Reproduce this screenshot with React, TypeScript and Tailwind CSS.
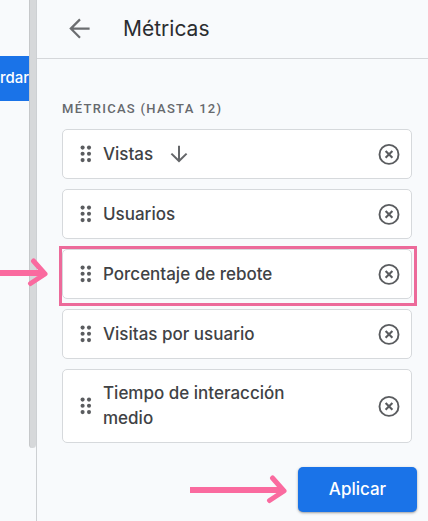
type Metric = {
  name: string;
  sorted?: boolean;
  highlighted?: boolean;
};

const metrics: Metric[] = [
  { name: "Vistas", sorted: true },
  { name: "Usuarios" },
  { name: "Porcentaje de rebote", highlighted: true },
  { name: "Visitas por usuario" },
  { name: "Tiempo de interacción medio" },
];

function BackIcon() {
  return (
    <svg viewBox="0 0 22 22" className="h-[22px] w-[22px]" fill="none" stroke="#6b6d70" strokeWidth="2.2">
      <path d="M20.6 10.6H2.6M11 1.4 1.8 10.6l9.2 9.2" />
    </svg>
  );
}

function SortIcon() {
  return (
    <svg viewBox="0 0 18 18" className="h-[18px] w-[18px] shrink-0" fill="none" stroke="#646669" strokeWidth="2">
      <path d="M9 .8v15M1.4 8.6 9 16l7.6-7.4" />
    </svg>
  );
}

function DragIcon() {
  return (
    <svg viewBox="0 0 12 18" className="h-[18px] w-3 shrink-0" fill="#5a5c5f">
      {[2.6, 8.8, 15.1].map((y) => (
        <g key={y}>
          <circle cx="2.6" cy={y} r="2.05" />
          <circle cx="9" cy={y} r="2.05" />
        </g>
      ))}
    </svg>
  );
}

function RemoveIcon() {
  return (
    <svg viewBox="0 0 22 22" className="h-[22px] w-[22px]" fill="none" stroke="#5a5c5f">
      <circle cx="11" cy="11.4" r="9.5" strokeWidth="1.9" />
      <path d="m7.6 8 6.8 6.8M14.4 8l-6.8 6.8" strokeWidth="2.1" />
    </svg>
  );
}

function PointerArrow({ className }: { className: string }) {
  return (
    <svg viewBox="0 0 98 30" className={className} fill="none" stroke="#fa6a9f">
      <path d="M0 15 92 15" strokeWidth="6" />
      <path d="M82.5 3 94 16 79.5 25.5" strokeWidth="5" strokeLinecap="round" strokeLinejoin="round" />
    </svg>
  );
}

function MetricCard({ metric }: { metric: Metric }) {
  return (
    <li className="relative flex min-h-[50px] items-center rounded-[5px] border border-[#d6d9dc] bg-white py-[11px] pr-[11px] pl-[17px]">
      <DragIcon />
      <div className="ml-[11px] flex min-w-0 flex-1 items-center gap-[17px] pr-20">
        <span className="text-[17px] leading-[25px] font-medium text-[#404245]">{metric.name}</span>
        {metric.sorted && <SortIcon />}
      </div>
      <button type="button" aria-label={`Quitar ${metric.name}`} className="shrink-0">
        <RemoveIcon />
      </button>
      {/* Callout drawn over the row */}
      {metric.highlighted && (
        <>
          <div className="pointer-events-none absolute -top-1 -right-1.5 -bottom-2 -left-1 border-3 border-[#ec6a9a]" />
          <PointerArrow className="pointer-events-none absolute top-2 right-full mr-3.5 h-[30px] w-[98px]" />
        </>
      )}
    </li>
  );
}

export default function App() {
  return (
    <div className="flex min-h-screen overflow-hidden bg-[#f8fafc] font-['Inter','Liberation_Sans',sans-serif]">
      {/* Page behind the panel */}
      <div className="w-[29px] shrink-0 pt-14">
        <button
          type="button"
          className="flex h-[45px] w-full items-center justify-center bg-[#1a73e8] text-[15px] font-medium text-white"
        >
          rdar
        </button>
      </div>
      <div className="flex w-2 shrink-0 flex-col border-r border-[#cdd0d3]">
        <div className="h-[448px] rounded-b-sm border-l border-[#c6c8ca] bg-[#d6d8da]" />
      </div>

      <main className="min-w-0 flex-1">
        <header className="flex h-[59px] items-center gap-8 border-b border-[#d5d7da] pl-8">
          <button type="button" aria-label="Volver">
            <BackIcon />
          </button>
          <h1 className="text-[21px] leading-7 text-[#2b2d30]">Métricas</h1>
        </header>

        <section className="pt-10 pr-4 pl-[25px]">
          <h2 className="font-['Roboto','Liberation_Sans',sans-serif] text-[13px] leading-5 font-medium tracking-widest text-[#66696d]">
            MÉTRICAS (HASTA 12)
          </h2>
          <ul className="mt-2.5 flex flex-col gap-2.5">
            {metrics.map((metric) => (
              <MetricCard key={metric.name} metric={metric} />
            ))}
          </ul>
        </section>

        <footer className="flex items-center justify-end gap-2.5 pt-6 pr-[11px] pb-2">
          <PointerArrow className="h-[30px] w-[98px] shrink-0" />
          <button
            type="button"
            className="h-[45px] w-[119px] rounded-[5px] bg-[#1a73e8] text-[17px] font-medium text-white shadow-sm shadow-black/30"
          >
            Aplicar
          </button>
        </footer>
      </main>
    </div>
  );
}
